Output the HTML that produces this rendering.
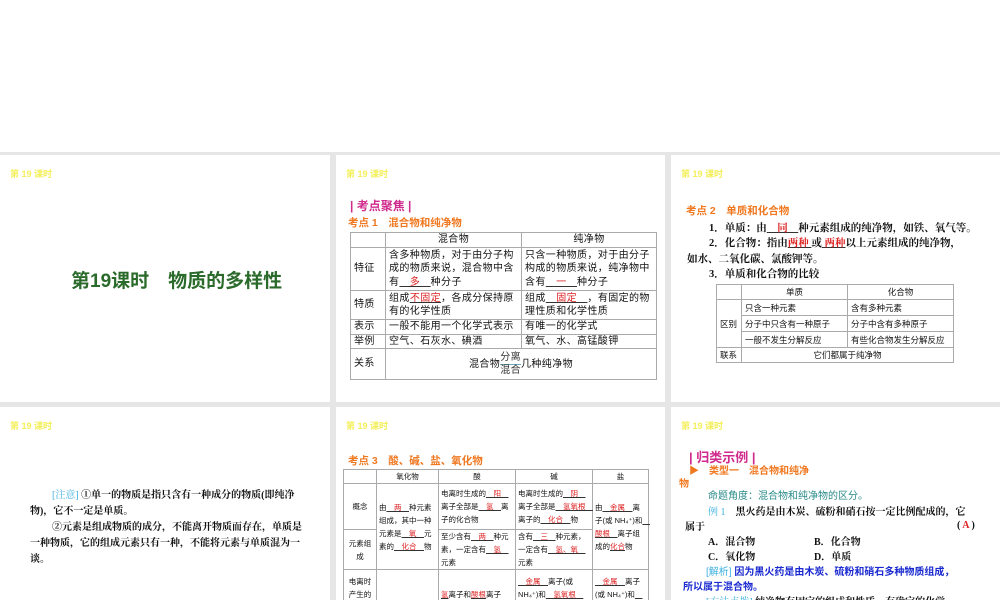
<!DOCTYPE html>
<html><head><meta charset="utf-8"><style>
*{margin:0;padding:0;box-sizing:border-box}
body{width:1000px;height:600px;overflow:hidden;background:#fff;position:relative;font-family:"Liberation Sans","Noto Sans CJK SC",sans-serif;color:#111}
.bg{position:absolute;left:0;top:152px;width:1000px;height:448px;background:#e6e6e6}
.s{position:absolute;background:#fff;overflow:hidden}
.h{position:absolute;left:10px;top:12px;font-size:9px;color:#f3ef5a;font-weight:bold}
.a{position:absolute;white-space:nowrap}
table{position:absolute;border-collapse:collapse;font-size:10px;line-height:13.5px}
td{border:1px solid #aaa;padding:0 3px;vertical-align:middle}
.r{color:#d22;text-decoration:underline;text-decoration-color:#333}
.o{color:#f07820;font-weight:bold}
.serif{font-family:"Liberation Serif","Noto Serif CJK SC",serif}
.t5 td{padding:0 2px}
</style></head><body>
<div class="bg"></div>

<div class="s" style="left:0;top:155px;width:330px;height:247px">
<div class="h">第 19 课时</div>
<div class="a" style="left:71px;top:111px;font-size:19px;color:#2a6a2a;font-weight:bold">第19课时　物质的多样性</div>
</div>

<div class="s" style="left:336px;top:155px;width:329px;height:247px">
<div class="h">第 19 课时</div>
<div class="a" style="left:14px;top:42px;font-size:12px;color:#d02a8c;font-weight:bold">| 考点聚焦 |</div>
<div class="a o" style="left:12px;top:60px;font-size:10.5px">考点 1　混合物和纯净物</div>
<table style="left:14px;top:77px;width:307px;letter-spacing:0.4px">
<tr style="height:15px"><td style="width:35px"></td><td style="width:136px;text-align:center">混合物</td><td style="text-align:center">纯净物</td></tr>
<tr style="height:43px"><td>特征</td><td>含多种物质，对于由分子构成的物质来说，混合物中含有<span class="r">　多　</span>种分子</td><td>只含一种物质，对于由分子构成的物质来说，纯净物中含有<span class="r">　一　</span>种分子</td></tr>
<tr style="height:29px"><td>特质</td><td>组成<span class="r">不固定</span>，各成分保持原有的化学性质</td><td>组成<span class="r">　固定　</span>，有固定的物理性质和化学性质</td></tr>
<tr style="height:14px"><td>表示</td><td>一般不能用一个化学式表示</td><td>有唯一的化学式</td></tr>
<tr style="height:14px"><td>举例</td><td>空气、石灰水、碘酒</td><td>氧气、水、高锰酸钾</td></tr>
<tr style="height:31px"><td>关系</td><td colspan="2" style="text-align:center">混合物<span style="display:inline-flex;flex-direction:column;vertical-align:middle;line-height:12px;font-size:10px;color:#333"><span style="border-bottom:1px solid #6ab">分离</span><span>混合</span></span>几种纯净物</td></tr>
</table>
</div>

<div class="s" style="left:671px;top:155px;width:329px;height:247px">
<div class="h">第 19 课时</div>
<div class="a o" style="left:15px;top:48px;font-size:10.5px">考点 2　单质和化合物</div>
<div class="a serif" style="left:38px;top:65px;font-size:10.5px;font-weight:bold">1．单质：由<span class="r">　同　</span>种元素组成的纯净物，如铁、氧气等。</div>
<div class="a serif" style="left:38px;top:80px;font-size:10.5px;font-weight:bold">2．化合物：指由<span class="r">两种 </span>或<span class="r"> 两种</span>以上元素组成的纯净物，</div>
<div class="a serif" style="left:16px;top:96px;font-size:10.5px;font-weight:bold">如水、二氧化碳、氯酸钾等。</div>
<div class="a serif" style="left:38px;top:111px;font-size:10.5px;font-weight:bold">3．单质和化合物的比较</div>
<table style="left:45px;top:129px;width:238px;font-size:8.5px;line-height:14px">
<tr style="height:15px"><td style="width:25px"></td><td style="width:106px;text-align:center">单质</td><td style="text-align:center">化合物</td></tr>
<tr style="height:16px"><td rowspan="3">区别</td><td>只含一种元素</td><td>含有多种元素</td></tr>
<tr style="height:16px"><td>分子中只含有一种原子</td><td>分子中含有多种原子</td></tr>
<tr style="height:16px"><td>一般不发生分解反应</td><td>有些化合物发生分解反应</td></tr>
<tr style="height:15px"><td>联系</td><td colspan="2" style="text-align:center">它们都属于纯净物</td></tr>
</table>
</div>

<div class="s" style="left:0;top:407px;width:330px;height:193px">
<div class="h">第 19 课时</div>
<div class="serif" style="position:absolute;left:30px;top:81px;width:280px;font-size:10px;line-height:16px;font-weight:bold">
<div style="text-indent:22px"><span style="color:#3bb0e0;font-weight:normal">[注意]</span> ①单一的物质是指只含有一种成分的物质(即纯净物)，它不一定是单质。</div>
<div style="text-indent:22px">②元素是组成物质的成分，不能离开物质而存在，单质是一种物质，它的组成元素只有一种，不能将元素与单质混为一谈。</div>
</div>
</div>

<div class="s" style="left:336px;top:407px;width:329px;height:193px">
<div class="h">第 19 课时</div>
<div class="a o" style="left:12px;top:46px;font-size:10.5px">考点 3　酸、碱、盐、氧化物</div>
<table class="t5" style="left:7px;top:62px;width:306px;font-size:7.5px;line-height:13px">
<tr style="height:14px"><td style="width:33px"></td><td style="width:62px;text-align:center">氧化物</td><td style="width:77px;text-align:center">酸</td><td style="width:77px;text-align:center">碱</td><td style="text-align:center">盐</td></tr>
<tr style="height:46px"><td style="text-align:center">概念</td><td rowspan="2">由<span class="r">　两　</span>种元素组成，其中一种元素是<span class="r">　氧　</span>元素的<span class="r">　化合　</span>物</td><td>电离时生成的<span class="r">　阳　</span>离子全部是<span class="r">　氢　</span>离子的化合物</td><td>电离时生成的<span class="r">　阴　</span>离子全部是<span class="r">　氢氧根　</span>离子的<span class="r">　化合　</span>物</td><td rowspan="2">由<span class="r">　金属　</span>离子(或 NH₄⁺)和<span class="r">　酸根　</span>离子组成的<span class="r">化合</span>物</td></tr>
<tr style="height:36px"><td style="text-align:center">元素组成</td><td>至少含有<span class="r">　两　</span>种元素，一定含有<span class="r">　氢　</span>元素</td><td>含有<span class="r">　三　</span>种元素，一定含有<span class="r">　氢、氧　</span>元素</td></tr>
<tr style="height:50px"><td style="text-align:center">电离时产生的离子</td><td></td><td><span class="r">氢</span>离子和<span class="r">酸根</span>离子</td><td><span class="r">　金属　</span>离子(或 NH₄⁺)和<span class="r">　氢氧根　</span>离子</td><td><span class="r">　金属　</span>离子(或 NH₄⁺)和<span class="r">　酸根　</span>离子</td></tr>
</table>
</div>

<div class="s" style="left:671px;top:407px;width:329px;height:193px">
<div class="h">第 19 课时</div>
<div class="a" style="left:18px;top:40px;font-size:13px;color:#d02a8c;font-weight:bold">| 归类示例 |</div>
<div class="a" style="left:18px;top:55px;font-size:10px;color:#f07820;font-weight:bold">▶　类型一　混合物和纯净</div>
<div class="a" style="left:8px;top:68px;font-size:10px;color:#f07820;font-weight:bold">物</div>
<div class="a" style="left:37px;top:80px;font-size:10px;color:#2a8a8a">命题角度：混合物和纯净物的区分。</div>
<div class="a serif" style="left:37px;top:96px;font-size:10px;font-weight:bold"><span style="color:#3bb0e0;font-weight:normal">例 1</span>　黑火药是由木炭、硫粉和硝石按一定比例配成的，它</div>
<div class="a serif" style="left:14px;top:111px;font-size:10px;font-weight:bold">属于</div>
<div class="a serif" style="left:286px;top:113px;font-size:10px;font-weight:bold">( <span style="color:#d22">A</span> )</div>
<div class="a serif" style="left:37px;top:126px;font-size:10px;font-weight:bold">A．混合物</div>
<div class="a serif" style="left:143px;top:126px;font-size:10px;font-weight:bold">B．化合物</div>
<div class="a serif" style="left:37px;top:141px;font-size:10px;font-weight:bold">C．氧化物</div>
<div class="a serif" style="left:143px;top:141px;font-size:10px;font-weight:bold">D．单质</div>
<div class="a" style="left:35px;top:156px;font-size:10px;color:#1a2ad0;font-weight:bold"><span style="color:#3bb0e0;font-weight:normal">[解析]</span> 因为黑火药是由木炭、硫粉和硝石多种物质组成，</div>
<div class="a" style="left:12px;top:171px;font-size:10px;color:#1a2ad0;font-weight:bold">所以属于混合物。</div>
<div class="a serif" style="left:35px;top:186px;font-size:10px;font-weight:bold"><span style="color:#3bb0e0;font-weight:normal">[方法点拨]</span> 纯净物有固定的组成和性质，有确定的化学</div>
</div>
</body></html>
